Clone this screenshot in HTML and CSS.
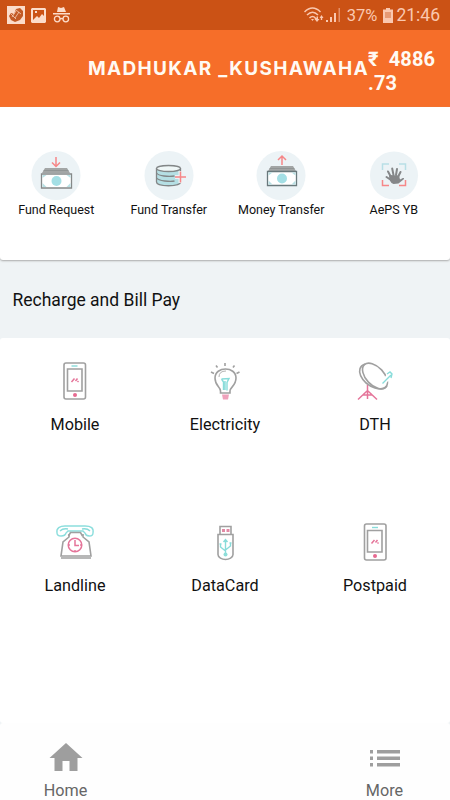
FILE: index.html
```html
<!DOCTYPE html>
<html lang="en">
<head>
  <meta charset="UTF-8">
  <meta name="viewport" content="width=device-width">
  <title>Recharge and Bill Pay</title>
  <link rel="stylesheet" href="styles.css">
</head>
<body>
  <div class="statusbar">
    <div class="notifications">
      <svg width="18" height="18" viewBox="0 0 18 18">
        <path fill="#fcdcca" d="M0 0h18v18H0z"/>
        <path fill="#c35a25" d="M9 3l4-1 3 3v5l-3 4-5 2-4-2-2-4 2-3 3 1z"/>
        <path fill="none" stroke="#fcdcca" stroke-width=".7" d="M5 11l4-6M8 12l4-6M4 8l5 5M9 4l5 4"/>
      </svg>
      <svg width="15" height="15" viewBox="0 0 15 15">
        <path fill="#fcdcca" fill-rule="evenodd" d="M1 0h13l1 1v13l-1 1H1l-1-1V1zM2 2v10l4-4 2 2 3-4 2 2V2zM4 3h2v2H4z"/>
      </svg>
      <svg class="incognito" width="17" height="16" viewBox="0 0 17 16">
        <path fill="#fcdcca" d="M5 0l3 1 3-1 2 5H4zM0 6h17v1.500H0z"/>
        <path fill="none" stroke="#fcdcca" stroke-width="1.300" d="M7 12a2.800 2.800 0 1 1-5.600 0a2.800 2.800 0 0 1 5.600 0q1.500-1 3 0a2.800 2.800 0 1 0 5.600 0a2.800 2.800 0 0 0-5.600 0"/>
      </svg>
    </div>
    <div class="system">
      <svg class="wifi" width="20" height="16" viewBox="0 0 20 16">
        <path fill="none" stroke="#fac8b0" stroke-width="1.500" d="M.5 5q8-8 16 0M3 8q5.500-5.500 11 0M5.500 11q3-3 6 0"/>
        <path fill="#fac8b0" d="M7 12h3l-1.500 2zM11 11h1.500V9.500H14V12h1.500l-2.500 3-2.500-3zM15.500 11l2-3 2 3h-1.300v2h-1.400v-2z"/>
      </svg>
      <svg class="signal" width="15" height="14" viewBox="0 0 15 14">
        <path fill="#fac8b0" d="M0 12h2v2H0zM4 9h2v5H4zM8 5h2v9H8z"/>
        <path fill="#e69068" d="M12.500 0h1.500v14h-1.500z"/>
      </svg>
      <span class="percent">37%</span>
      <svg class="battery" width="10" height="15" viewBox="0 0 10 15">
        <path fill="#fac8b0" fill-rule="evenodd" d="M3 0h4v1.500h3V15H0V1.500h3zM2 4v6h6V4z"/>
        <path fill="#e69a75" d="M2 4h6v6H2z"/>
      </svg>
      <span class="time">21:46</span>
    </div>
  </div>

  <header class="header">
    <h1 class="name">MADHUKAR _KUSHAWAHA</h1>
    <div class="balance">₹&nbsp; 4886<br>.73</div>
  </header>

  <section class="services">
    <div class="service">
      <svg class="service-icon" viewBox="0 0 50 50">
        <circle class="disc" cx="25" cy="24.500" r="24.500"/>
        <path class="rose" d="M25 6v9M21 11.500l4 4 4-4"/>
        <path fill="#a3a6a6" d="M14 17h22l3 5H11z"/>
        <path fill="none" stroke="#858989" stroke-width=".6" d="M12.500 19.500h25"/>
        <path fill="#fff" stroke="#858989" stroke-width="1.300" d="M10.500 23h30v14h-30z"/>
        <path fill="#b8e0e4" d="M11.500 24h4l-4 3zM39.500 24h-4l4 3zM11.500 36v-4l4 4zM39.500 36v-4l-4 4z"/>
        <circle cx="25.500" cy="30" r="5" fill="#a4dfe5"/>
      </svg>
      <span>Fund Request</span>
    </div>
    <div class="service">
      <svg class="service-icon" viewBox="0 0 50 50">
        <circle class="disc" cx="25" cy="24.500" r="24.500"/>
        <path fill="#b5dfe4" stroke="#828687" stroke-width="1.300" d="M12.500 17v14c0 5 24 5 24 0V17"/>
        <ellipse cx="24.500" cy="17.500" rx="12" ry="3" fill="#eff7f7" stroke="#828687" stroke-width="1.300"/>
        <path fill="none" stroke="#828687" stroke-width="1.300" d="M12.500 22c2 3 12 4 18 3M12.500 27c2 3 14 4 18 3"/>
        <path stroke="#ecf3f6" stroke-width="4" d="M36.500 20v12M31 26h11"/>
        <path class="rose" d="M36.500 20.500v11M31 26h11"/>
      </svg>
      <span>Fund Transfer</span>
    </div>
    <div class="service">
      <svg class="service-icon" viewBox="0 0 50 50">
        <circle class="disc" cx="25" cy="24.500" r="24.500"/>
        <path class="rose" d="M26 14V5M22 9l4-4 4 4"/>
        <path fill="#a3a6a6" d="M15 15h22l3 5H12z"/>
        <path fill="none" stroke="#858989" stroke-width=".6" d="M13.500 17.500h25"/>
        <path fill="#fff" stroke="#69797c" stroke-width="1.300" d="M11.500 20.500h29v14h-29z"/>
        <path fill="#b8e0e4" d="M12.500 21.500h4l-4 3zM39.500 21.500h-4l4 3zM12.500 33.500v-4l4 4zM39.500 33.500v-4l-4 4z"/>
        <circle cx="26" cy="27.500" r="5" fill="#a4dfe5"/>
      </svg>
      <span>Money Transfer</span>
    </div>
    <div class="service">
      <svg class="service-icon" viewBox="0 0 50 50">
        <circle class="disc" cx="25" cy="24.500" r="24"/>
        <path fill="none" stroke="#b8dfe6" stroke-width="1.500" d="M13.500 19v-6H20M30 13h6.500v6"/>
        <path class="rose" d="M13.500 29v5.500H20M30 34.500h6.500V29"/>
        <path fill="none" stroke="#858789" stroke-width="2" stroke-linecap="round" d="M22 26l-3-5.500M24.500 24l-1.300-6.500M27 24l1-6M29 26l2.500-5M22 29l-4.500-3"/>
        <path fill="#858789" d="M20.500 24l9.500.5 1 4 2-1c2-1 2.500 0 1.500 1l-5 4-5 .5c-3-1-4.500-4-4.500-9z"/>
      </svg>
      <span>AePS YB</span>
    </div>
  </section>

  <h2 class="section-title">Recharge and Bill Pay</h2>

  <main class="bills">
    <div class="bill">
      <svg class="bill-icon" viewBox="0 0 40 40">
        <rect class="line" x="9" y="2" width="21.500" height="36" rx="2"/>
        <path class="line" d="M12.500 8h14.500v22H12.500z"/>
        <path class="teal" d="M16.500 5h6"/>
        <path class="pink" d="M16.500 21l3-3.500M20.500 20l2-2.500M22.500 21l1-1"/>
        <circle cx="20" cy="34" r="2" fill="#e76a91"/>
      </svg>
      <span>Mobile</span>
    </div>
    <div class="bill">
      <svg class="bill-icon" viewBox="0 0 40 40">
        <path class="line" d="M6 11l3 1.500M11 4.500l1.500 2M20 2v3M28 6.500l1.500-2M31.500 12.500l3-1.500"/>
        <path class="line" d="M15.500 32v-2c0-4-5.500-5-5.500-13 0-12 21-12 21 0 0 8-6 9-6 13v2z"/>
        <path fill="none" stroke="#b2b2b2" d="M14 16q0-6 7-6"/>
        <path class="teal" d="M16.500 18l7.500-.5-2 4v8M18.500 29v-8l-2-3M20 20v9"/>
        <path fill="#efa1bb" d="M17 33.500h7L23 38.500h-5z"/>
      </svg>
      <span>Electricity</span>
    </div>
    <div class="bill">
      <svg class="bill-icon" viewBox="0 0 40 40">
        <path class="pink" d="M12.500 24v14M12 30l-9 8.500M13 30l9 8.500M7.500 34h10"/>
        <ellipse class="dish" cx="20" cy="15" rx="9" ry="15.500" transform="rotate(-43 20 15)"/>
        <path class="line" d="M10 3C-1 7 6 22 20 27c5 1.500 10 1 12-2.500"/>
        <path stroke="#fff" stroke-width="5" d="M28 22l6-7"/>
        <path class="teal" d="M27.500 22.500l8.500-8.500M32 13l3-2 2 2-1 4"/>
      </svg>
      <span>DTH</span>
    </div>
    <div class="bill">
      <svg class="bill-icon" viewBox="0 0 40 40">
        <path class="line" d="M14 12v3l-6 5-2 14h30l-2-14-6-5v-3M6 36h30"/>
        <path fill="#fff" stroke="#8cdedd" stroke-width="1.400" d="M2 11C1 6 5 4 10 4h20c6 0 9 2 8 7 0 4-7 4-8 0l-2-2H13l-2 2c-1 4-9 4-9 0z"/>
        <path class="teal" d="M5 9q3-3 8-2M35 9q-3-3-8-2"/>
        <path class="line" d="M13.500 14l2-3.500h10l2 3.500"/>
        <circle class="pink" cx="20" cy="23" r="6.800"/>
        <path class="pink" d="M20 18v5.500h4M20 28v1M14 23h1M25 23h1"/>
      </svg>
      <span>Landline</span>
    </div>
    <div class="bill">
      <svg class="bill-icon" viewBox="0 0 40 40">
        <path class="line" d="M15 12.500V4.500h11v8M13 12.500h15v20c0 3-4 5-7.500 5S13 35.500 13 32.500z"/>
        <path fill="#e18aa5" d="M17 7h3v3h-3zM21.500 7h3v3h-3z"/>
        <path class="teal" d="M20.500 18v16M15.500 22v3l5 4M25.500 21v3l-5 4M18.500 20l2-2.500 2 2.500M14.500 22h2M24.500 21h2"/>
        <circle cx="20.500" cy="32.500" r="2" fill="#8dded9"/>
      </svg>
      <span>DataCard</span>
    </div>
    <div class="bill">
      <svg class="bill-icon" viewBox="0 0 40 40">
        <rect class="line" x="9.500" y="2" width="21.500" height="36" rx="2"/>
        <path class="line" d="M12.500 8.500H27V30H12.500z"/>
        <path class="teal" d="M17 5.500h6"/>
        <path class="pink" d="M16.500 21.500l3-3.500M20.500 20.500l2-2.500M22.500 21.500l1-1"/>
        <circle cx="20" cy="34" r="2" fill="#e76a91"/>
      </svg>
      <span>Postpaid</span>
    </div>
  </main>

  <nav class="tabs">
    <div class="tab">
      <svg width="34" height="30" viewBox="0 0 34 30">
        <path fill="#9e9e9e" d="M17 1l16.500 15h-5v13h-8V19h-7v10h-8V16h-5z"/>
      </svg>
      <span>Home</span>
    </div>
    <div class="tab">
      <svg width="34" height="30" viewBox="0 0 34 30">
        <path fill="#9e9e9e" d="M2 8h3v3.500H2zM9 8h23v3.500H9zM2 14.500h3V18H2zM9 14.500h23V18H9zM2 21h3v3.500H2zM9 21h23v3.500H9z"/>
      </svg>
      <span>More</span>
    </div>
  </nav>
</body>
</html>
```
FILE: styles.css
```css
body {
  display: flex;
  flex-direction: column;
  height: 800px;
  margin: 0;
  background: #eff3f5;
  color: #111;
  font-family: Roboto, "Liberation Sans", sans-serif;
  overflow: hidden;
}
svg {
  display: block;
  flex-shrink: 0;
}
.statusbar {
  display: flex;
  justify-content: space-between;
  align-items: center;
  height: 30px;
  padding: 0 10px 0 7px;
  background: #cb5215;
  color: #fac8b0;
}
.notifications {
  display: flex;
  align-items: center;
  gap: 6px;
}
.incognito {
  margin-left: 1px;
}
.system {
  display: flex;
  align-items: center;
  font-size: 17.5px;
}
.percent {
  font-size: 16.5px;
}
.signal {
  margin: 0 6px 0 2px;
}
.battery {
  margin: 0 3px 0 6px;
}
.header {
  display: flex;
  align-items: center;
  height: 77px;
  padding-left: 88px;
  background: #f66e29;
  color: #fffaf3;
}
.name {
  width: 280px;
  margin: 0;
  font: 700 19px Inter, sans-serif;
  letter-spacing: 1.3px;
  white-space: nowrap;
}
.balance {
  margin-top: 4px;
  font-size: 20px;
  font-weight: 700;
  line-height: 24px;
  letter-spacing: 0.1px;
  white-space: nowrap;
}
.services {
  display: grid;
  grid-template-columns: repeat(4, 1fr);
  height: 109px;
  padding-top: 44px;
  background: #fff;
  border-radius: 0 0 3px 3px;
  box-shadow: 0 1px 2px #aaa;
}
.service {
  display: flex;
  flex-direction: column;
  align-items: center;
  font-size: 12.5px;
  line-height: 17px;
}
.service-icon {
  width: 50px;
  height: 50px;
}
.disc {
  fill: #ecf3f6;
}
.rose {
  fill: none;
  stroke: #f68788;
  stroke-width: 1.5;
}
.section-title {
  height: 78px;
  margin: 0;
  padding-left: 12.5px;
  font-size: 17.5px;
  font-weight: 400;
  line-height: 81px;
}
.bills {
  display: grid;
  grid-template-columns: repeat(3, 1fr);
  grid-template-rows: 161px 161px;
  height: 362px;
  padding-top: 23px;
  background: #fff;
  border-radius: 3px;
}
.bill {
  display: flex;
  flex-direction: column;
  align-items: center;
  gap: 14px;
  font-size: 16.2px;
  line-height: 20px;
}
.bill-icon {
  width: 40px;
  height: 40px;
}
.line,
.dish {
  fill: none;
  stroke: #a0a0a0;
  stroke-width: 1.6;
}
.teal {
  fill: none;
  stroke: #88dcda;
  stroke-width: 1.4;
}
.pink {
  fill: none;
  stroke: #e5759a;
  stroke-width: 1.5;
}
.tabs {
  display: flex;
  justify-content: space-between;
  height: 58px;
  padding: 19px 41px 0 41px;
  background: #fefefe;
  border-radius: 3px 3px 0 0;
}
.tab {
  display: flex;
  flex-direction: column;
  align-items: center;
  width: 49px;
  gap: 9px;
  color: #666;
  font-size: 16.2px;
  line-height: 20px;
}
```
